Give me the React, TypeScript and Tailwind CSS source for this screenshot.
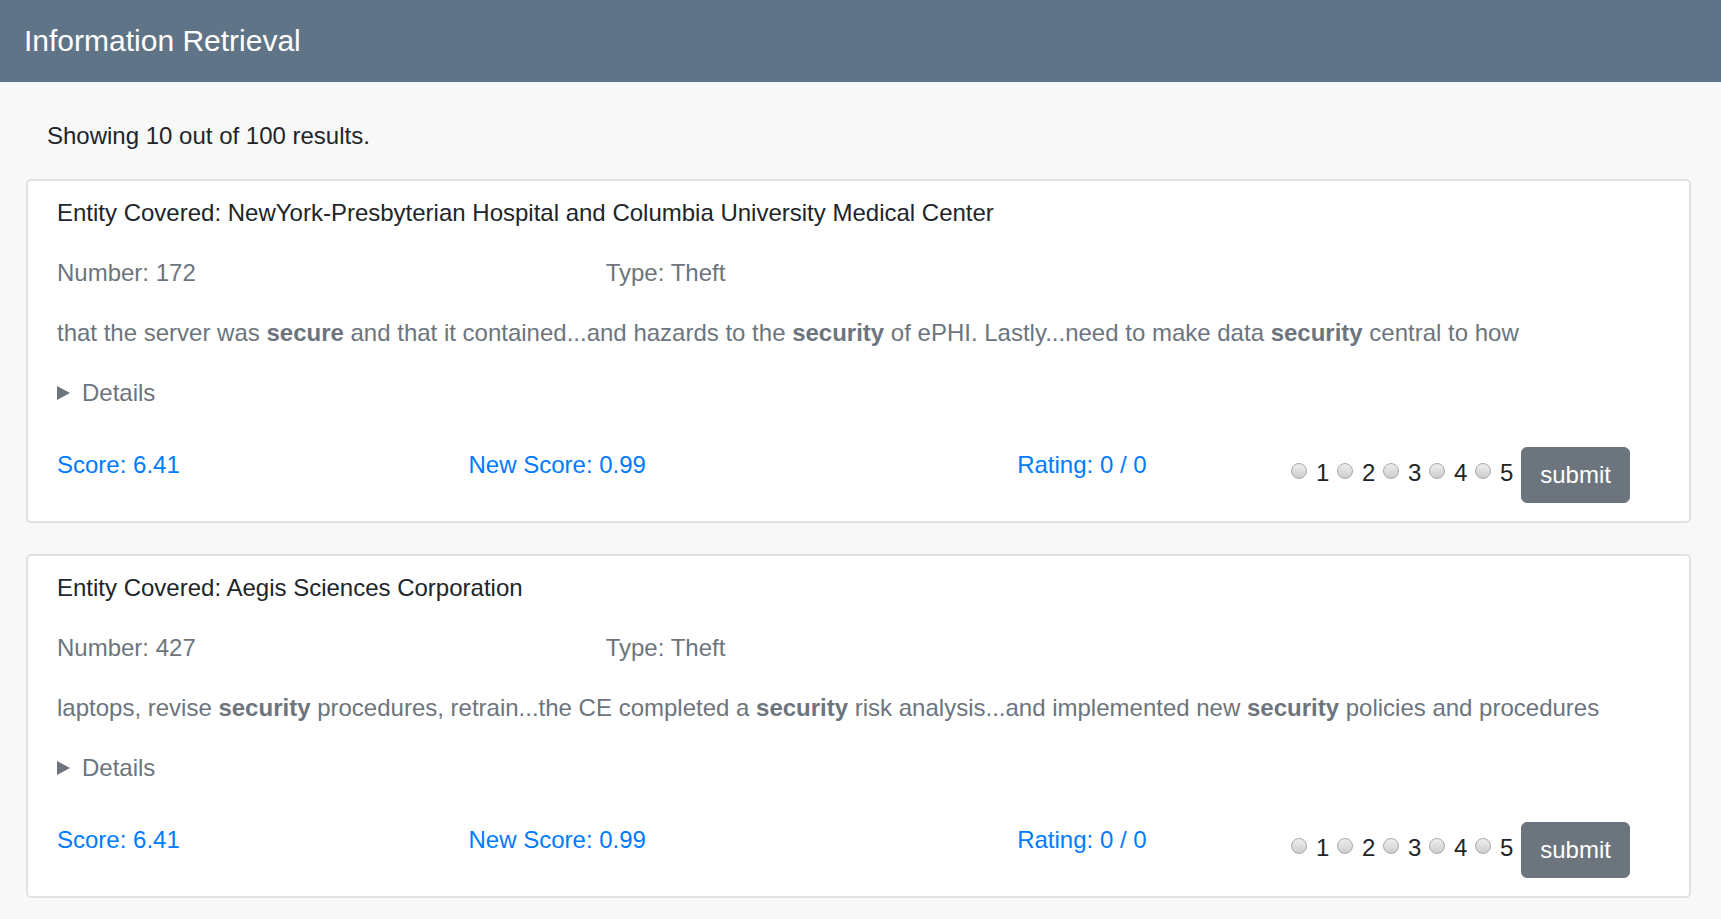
// Search results page: header bar, result count and rated result cards

type Result = {
  entity: string
  number: number
  type: string
  snippet: (string | { b: string })[]
  score: string
  newScore: string
  rating: string
}

const results: Result[] = [
  {
    entity: 'NewYork-Presbyterian Hospital and Columbia University Medical Center',
    number: 172,
    type: 'Theft',
    snippet: [
      'that the server was ',
      { b: 'secure' },
      ' and that it contained...and hazards to the ',
      { b: 'security' },
      ' of ePHI. Lastly...need to make data ',
      { b: 'security' },
      ' central to how',
    ],
    score: '6.41',
    newScore: '0.99',
    rating: '0 / 0',
  },
  {
    entity: 'Aegis Sciences Corporation',
    number: 427,
    type: 'Theft',
    snippet: [
      'laptops, revise ',
      { b: 'security' },
      ' procedures, retrain...the CE completed a ',
      { b: 'security' },
      ' risk analysis...and implemented new ',
      { b: 'security' },
      ' policies and procedures',
    ],
    score: '6.41',
    newScore: '0.99',
    rating: '0 / 0',
  },
]

function Radio() {
  return (
    <span className="mb-[4px] inline-block h-[16px] w-[16px] shrink-0 rounded-full border border-[#a8a8a8] bg-gradient-to-b from-[#eeeeee] to-[#cdcdcd]" />
  )
}

function ResultCard({ r }: { r: Result }) {
  return (
    <div className="mb-[31px] rounded-[5px] border-2 border-[#e1e1e1] bg-white pb-[18px] pl-[29px] pr-[30px] pt-[14px]">
      <p className="mb-[24px] text-[#212529]">Entity Covered: {r.entity}</p>
      <div className="mb-[24px] grid grid-cols-[548.7px_1fr] text-[#6c757d]">
        <span>Number: {r.number}</span>
        <span>Type: {r.type}</span>
      </div>
      <p className="mb-[24px] whitespace-nowrap text-[#6c757d]">
        {r.snippet.map((s, i) =>
          typeof s === 'string' ? <span key={i}>{s}</span> : <b key={i} className="font-bold">{s.b}</b>
        )}
      </p>
      <div className="flex items-center text-[#6c757d]">
        <svg width="13" height="14" viewBox="0 0 13 14" className="mr-[12px]">
          <path d="M0 0 L13 7 L0 14 Z" fill="#6c757d" />
        </svg>
        <span>Details</span>
      </div>
      <div className="mt-[36px] grid grid-cols-[411.5px_548.7px_274.3px_1fr] items-start text-[#007bff]">
        <span>Score: {r.score}</span>
        <span>New Score: {r.newScore}</span>
        <span>Rating: {r.rating}</span>
        <div className="flex items-start gap-[8px]">
          {[1, 2, 3, 4, 5].map((n) => (
            <div key={n} className="mt-[8px] flex items-center text-[#212529]">
              <Radio />
              <span className="ml-[8.6px]">{n}</span>
            </div>
          ))}
          <button
            type="button"
            className="h-[56px] rounded-[6px] border border-[#6c757d] bg-[#6c757d] px-[18px] leading-[36px] text-white"
          >
            submit
          </button>
        </div>
      </div>
    </div>
  )
}

export default function App() {
  return (
    <div className="min-h-screen bg-[#f8f8f8] text-[24px] leading-[36px]" style={{ fontFamily: '"Liberation Sans", Arial, sans-serif' }}>
      <header className="flex h-[82px] items-center bg-[#5f7587] px-[24px]">
        <h1 className="text-[30px] leading-[36px] text-white">Information Retrieval</h1>
      </header>
      <main className="pl-[26px] pr-[30px]">
        <p className="mb-[25px] ml-[21px] mt-[36px] text-[#212529]">Showing 10 out of 100 results.</p>
        {results.map((r, i) => (
          <ResultCard key={i} r={r} />
        ))}
      </main>
    </div>
  )
}
